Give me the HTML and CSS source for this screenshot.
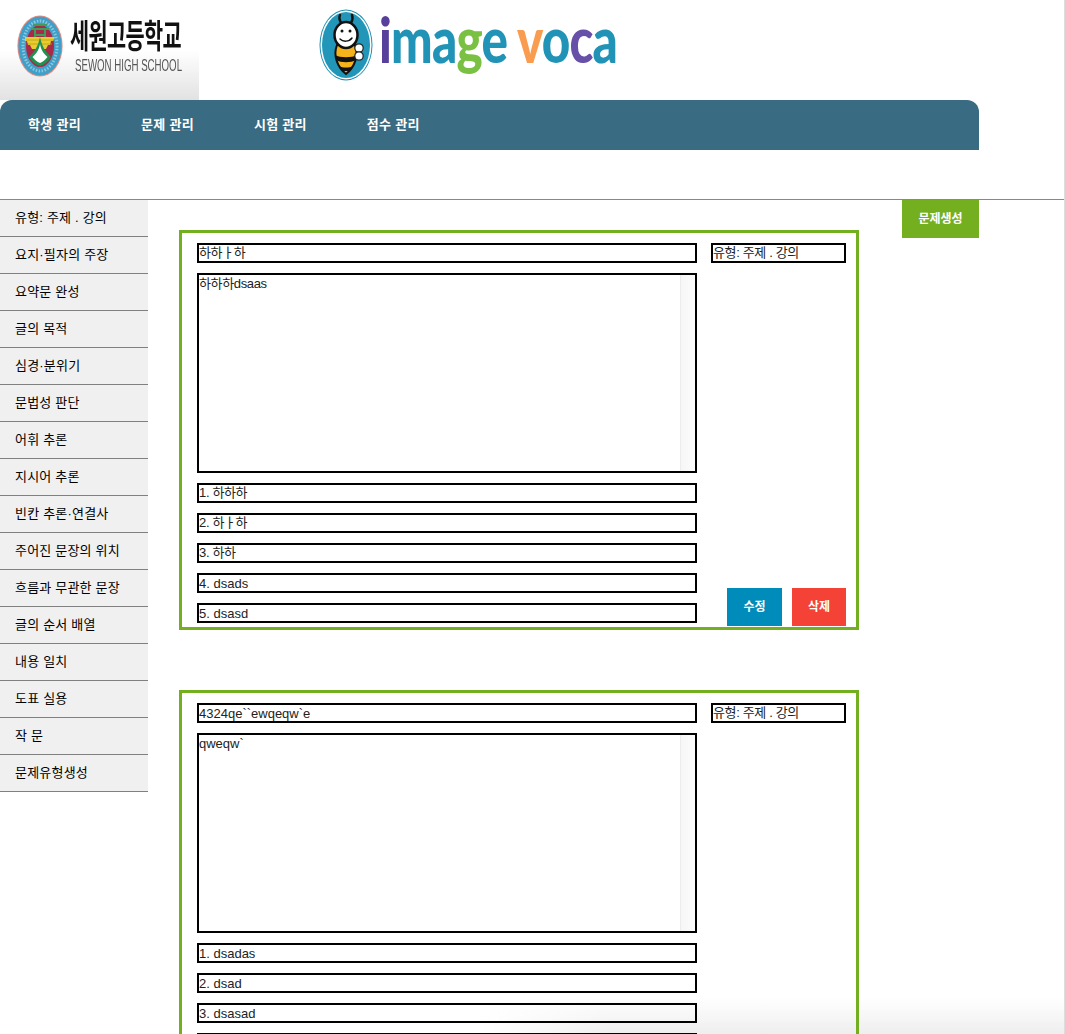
FILE: index.html
```html
<!DOCTYPE html>
<html lang="ko">
<head>
<meta charset="utf-8">
<title>image voca</title>
<link rel="stylesheet" href="styles.css">
</head>
<body>
<div class="page">
  <div class="bottom-shade"></div>
  <header class="brand-row">
    <a class="school" href="#">
      <svg class="emblem" viewBox="0 0 46 62" width="46" height="62" aria-hidden="true">
        <ellipse cx="23" cy="31" rx="22.6" ry="30.6" fill="#e58a80"/>
        <ellipse cx="23" cy="31" rx="21.6" ry="29.6" fill="#3e9fc9"/>
        <ellipse cx="23" cy="31" rx="17" ry="25" fill="none" stroke="#8fc6dc" stroke-width="3" stroke-dasharray="1.5 1.5"/>
        <ellipse cx="23" cy="31" rx="14" ry="21" fill="#a92a48"/>
        <path d="M8 22h30l-2 4h-2l-1 4h-2l-2 4H15l-2-4h-2l-1-4H8z" fill="#e9cc2e"/>
        <path d="M9 25h28M11 29h24" stroke="#b9a020" stroke-width=".8"/>
        <path d="M16 10h14M14 14h18M18 14v8M28 14v8M17 20h12" stroke="#3f9d5c" stroke-width="2" fill="none"/>
        <path d="M23 22 C21 32 17 37 12 42 C15 47 19 50 23 51 C27 50 31 47 34 42 C29 37 25 32 23 22z" fill="#1f9150"/>
        <path d="M23 29 C22 35 19 39 15.500 42 C18 45 20 47 23 48 C26 47 28 45 30.500 42 C27 39 24 35 23 29z" fill="#fff"/>
      </svg>
      <span class="school-text">
        <span class="school-ko">세원고등학교</span>
        <span class="school-en">SEWON HIGH SCHOOL</span>
      </span>
    </a>
    <a class="voca" href="#">
      <svg class="bee" viewBox="0 0 54 72" width="54" height="72" aria-hidden="true">
        <ellipse cx="27" cy="36" rx="26.500" ry="35.500" fill="#1f8fb3"/>
        <ellipse cx="27" cy="36" rx="25.500" ry="34.500" fill="#fff"/>
        <ellipse cx="27" cy="36" rx="24" ry="33" fill="#2196b8"/>
        <path d="M22 14 C20 10 20 8 21 6 M32 14 C34 11 34 9 33 6" stroke="#111" stroke-width="2.500" fill="none" stroke-linecap="round"/>
        <path d="M18 36 C14 46 18 58 27 65 C36 58 40 46 36 36z" fill="#f6b21b" stroke="#111" stroke-width="2"/>
        <path d="M16 46 C21 49 33 49 38 46 L37 51 C32 54 22 54 17 51z M20 57 C24 59 30 59 34 57 L31 62 H23z" fill="#111"/>
        <ellipse cx="27" cy="26" rx="11.500" ry="13" fill="#fff" stroke="#111" stroke-width="2.500"/>
        <circle cx="23" cy="22" r="1.500" fill="#111"/>
        <circle cx="31" cy="22" r="1.500" fill="#111"/>
        <path d="M21 30 C24 33 30 33 33 29" stroke="#111" stroke-width="1.500" fill="none" stroke-linecap="round"/>
        <circle cx="40" cy="39" r="4.200" fill="#fff" stroke="#222" stroke-width="1.200"/>
        <circle cx="40" cy="47" r="4.200" fill="#fff" stroke="#222" stroke-width="1.200"/>
      </svg>
      <span class="wordmark"><span class="c-purple">i</span><span class="c-blue">ma</span><span class="c-green">g</span><span class="c-blue">e</span> <span class="c-orange">v</span><span class="c-blue">o</span><span class="c-violet">c</span><span class="c-blue">a</span></span>
    </a>
  </header>

  <nav class="topnav">
    <a href="#">학생 관리</a>
    <a href="#">문제 관리</a>
    <a href="#">시험 관리</a>
    <a href="#">점수 관리</a>
  </nav>

  <div class="spacer"></div>

  <main class="main">
    <ul class="side">
      <li>유형: 주제 . 강의</li>
      <li>요지·필자의 주장</li>
      <li>요약문 완성</li>
      <li>글의 목적</li>
      <li>심경·분위기</li>
      <li>문법성 판단</li>
      <li>어휘 추론</li>
      <li>지시어 추론</li>
      <li>빈칸 추론·연결사</li>
      <li>주어진 문장의 위치</li>
      <li>흐름과 무관한 문장</li>
      <li>글의 순서 배열</li>
      <li>내용 일치</li>
      <li>도표 실용</li>
      <li>작 문</li>
      <li>문제유형생성</li>
    </ul>

    <div class="cards">
      <form class="card">
        <div class="fields">
          <div class="field ko">하하ㅏ하</div>
          <div class="area"><span class="ko">하하하dsaas</span><i class="track"></i></div>
          <div class="field ko">1. 하하하</div>
          <div class="field ko">2. 하ㅏ하</div>
          <div class="field ko">3. 하하</div>
          <div class="field">4. dsads</div>
          <div class="field">5. dsasd</div>
        </div>
        <div class="aside">
          <div class="field ko">유형: 주제 . 강의</div>
          <div class="actions">
            <button class="btn btn-edit" type="button">수정</button>
            <button class="btn btn-del" type="button">삭제</button>
          </div>
        </div>
      </form>

      <form class="card">
        <div class="fields">
          <div class="field">4324qe``ewqeqw`e</div>
          <div class="area"><span>qweqw`</span><i class="track"></i></div>
          <div class="field">1. dsadas</div>
          <div class="field">2. dsad</div>
          <div class="field">3. dsasad</div>
          <div class="field"></div>
          <div class="field"></div>
        </div>
        <div class="aside">
          <div class="field ko">유형: 주제 . 강의</div>
        </div>
      </form>
    </div>

    <button class="btn btn-create" type="button">문제생성</button>
  </main>
</div>
</body>
</html>
```
FILE: styles.css
```css
html, body {
  margin: 0;
  padding: 0;
  height: 100%;
  overflow: hidden;
  background: #fff;
}
body {
  font-family: "Liberation Sans", "Noto Sans CJK KR", sans-serif;
  color: #000;
}
a { text-decoration: none; color: inherit; }

.page {
  position: relative;
  height: 1034px;
  overflow: hidden;
  box-sizing: border-box;
  border-right: 1px solid #dcdcdc;
}
.bottom-shade {
  position: absolute;
  z-index: 0;
  left: 480px;
  right: 0;
  bottom: 0;
  height: 36px;
  background: linear-gradient(180deg, rgba(238,238,238,0), #eee);
  -webkit-mask-image: linear-gradient(90deg, transparent, #000 130px);
  mask-image: linear-gradient(90deg, transparent, #000 130px);
}

/* brand row */
.brand-row {
  display: flex;
  height: 100px;
}
.school {
  display: flex;
  box-sizing: border-box;
  width: 199px;
  height: 100px;
  padding: 15px 0 0 17px;
  background: linear-gradient(180deg, #fff 0, #fff 50%, #e2e2e2 100%);
}
.emblem { flex: none; }
.school-text {
  display: flex;
  flex-direction: column;
  margin-left: 7px;
}
.school-ko {
  font-size: 33px;
  font-weight: 700;
  line-height: 34px;
  margin-top: 5px;
  letter-spacing: -1px;
  white-space: nowrap;
  transform: scaleX(.63);
  transform-origin: left center;
  color: #111;
}
.school-en {
  font-size: 16px;
  line-height: 16px;
  margin: 4px 0 0 5px;
  white-space: nowrap;
  color: #555;
  transform: scaleX(.605);
  transform-origin: left center;
}
.voca {
  display: flex;
  margin-left: 120px;
  padding-top: 9px;
  height: 91px;
}
.bee { flex: none; }
.wordmark {
  margin: -5px 0 0 6px;
  font-family: "Lato", sans-serif;
  font-weight: 900;
  font-size: 62px;
  line-height: 70px;
  letter-spacing: -1px;
  white-space: nowrap;
  transform: scaleX(.797);
  transform-origin: left center;
}
.c-purple { color: #56409b; }
.c-blue { color: #2193b6; }
.c-green { color: #7ac143; }
.c-orange { color: #f99c50; }
.c-violet { color: #6750a8; }

/* nav */
.topnav {
  display: flex;
  width: 979px;
  height: 50px;
  box-sizing: border-box;
  padding: 0 0 4px 28px;
  gap: 60px;
  align-items: center;
  background: #396b82;
  border-radius: 12px 12px 0 0;
}
.topnav a {
  color: #fff;
  font-size: 13px;
  font-weight: 700;
  letter-spacing: .3px;
  white-space: nowrap;
}
.spacer {
  height: 49px;
  border-bottom: 1px solid #888;
}

/* main */
.main {
  position: relative;
  z-index: 1;
  display: flex;
  align-items: flex-start;
}
.side {
  flex: none;
  width: 148px;
  margin: 0;
  padding: 0;
  list-style: none;
  background: #f0f0f0;
}
.side li {
  height: 36px;
  line-height: 36px;
  padding-left: 15px;
  font-size: 13px;
  letter-spacing: .2px;
  border-bottom: 1px solid #808080;
  white-space: nowrap;
}
.cards {
  flex: none;
  width: 680px;
  margin: 30px 0 0 31px;
  display: flex;
  flex-direction: column;
  gap: 60px;
}
.card {
  display: grid;
  grid-template-columns: 500px 135px;
  column-gap: 14px;
  box-sizing: border-box;
  height: 400px;
  padding: 10px 10px 1px 15px;
  border: 3px solid #74af20;
}
.fields {
  display: flex;
  flex-direction: column;
  gap: 10px;
}
.field, .area {
  box-sizing: border-box;
  border: 2px solid #000;
  padding-top: 1px;
  font-size: 13px;
  line-height: 15px;
  color: #222;
  white-space: nowrap;
}
.field { height: 20px; }
.field.ko { padding-top: 0; }
.ko { letter-spacing: -.35px; }
.area {
  position: relative;
  height: 200px;
}
.track {
  position: absolute;
  top: 0;
  right: 0;
  bottom: 0;
  width: 15px;
  box-sizing: border-box;
  border-left: 1px solid #ececec;
  background: linear-gradient(90deg, #f6f6f6, #fcfcfc);
}
.aside {
  display: flex;
  flex-direction: column;
  justify-content: space-between;
}
.actions {
  display: flex;
  justify-content: flex-end;
  gap: 10px;
}
.btn {
  height: 38px;
  padding: 0 0 3px;
  border: 0;
  color: #fff;
  font-family: inherit;
  font-size: 12px;
  font-weight: 700;
}
.btn-edit { width: 55px; background: #008cba; }
.btn-del { width: 54px; background: #f44336; }
.btn-create {
  flex: none;
  width: 77px;
  margin-left: 43px;
  background: #74af20;
}
```
